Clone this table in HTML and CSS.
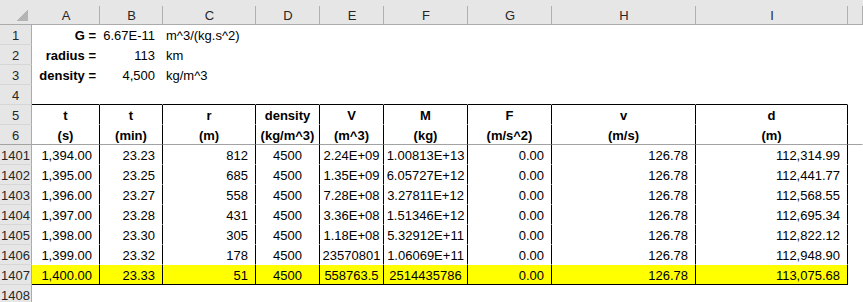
FILE: index.html
```html
<!DOCTYPE html>
<html lang="en">
<head>
    <meta charset="UTF-8">
    <meta name="viewport" content="width=device-width, initial-scale=1.0">
    <title>Orbit sheet</title>
    <link rel="stylesheet" href="styles.css">
</head>
<body>
    <div class="sheet">
        <div class="row heads">
            <div class="corner"></div>
            <div class="ch">A</div><div class="ch">B</div><div class="ch">C</div><div class="ch">D</div><div class="ch">E</div>
            <div class="ch">F</div><div class="ch">G</div><div class="ch">H</div><div class="ch">I</div><div class="ch"></div>
        </div>

        <div class="row">
            <div class="rh">1</div>
            <div class="c r-tight b">G =</div><div class="c r">6.67E-11</div><div class="c l">m^3/(kg.s^2)</div>
            <div class="c"></div><div class="c"></div><div class="c"></div><div class="c"></div><div class="c"></div><div class="c"></div><div class="pad"></div>
        </div>
        <div class="row">
            <div class="rh">2</div>
            <div class="c r-tight b">radius =</div><div class="c r">113</div><div class="c l">km</div>
            <div class="c"></div><div class="c"></div><div class="c"></div><div class="c"></div><div class="c"></div><div class="c"></div><div class="pad"></div>
        </div>
        <div class="row">
            <div class="rh">3</div>
            <div class="c r-tight b">density =</div><div class="c r">4,500</div><div class="c l">kg/m^3</div>
            <div class="c"></div><div class="c"></div><div class="c"></div><div class="c"></div><div class="c"></div><div class="c"></div><div class="pad"></div>
        </div>
        <div class="row edge-top">
            <div class="rh">4</div>
            <div class="c"></div><div class="c"></div><div class="c"></div><div class="c"></div><div class="c"></div>
            <div class="c"></div><div class="c"></div><div class="c"></div><div class="c"></div><div class="pad"></div>
        </div>

        <div class="row boxed titles">
            <div class="rh">5</div>
            <div class="c">t</div><div class="c">t</div><div class="c">r</div><div class="c">density</div><div class="c">V</div>
            <div class="c">M</div><div class="c">F</div><div class="c">v</div><div class="c">d</div><div class="pad"></div>
        </div>
        <div class="row boxed titles freeze">
            <div class="rh">6</div>
            <div class="c">(s)</div><div class="c">(min)</div><div class="c">(m)</div><div class="c">(kg/m^3)</div><div class="c">(m^3)</div>
            <div class="c">(kg)</div><div class="c">(m/s^2)</div><div class="c">(m/s)</div><div class="c">(m)</div><div class="pad"></div>
        </div>

        <div class="row boxed data">
            <div class="rh">1401</div>
            <div class="c r">1,394.00</div><div class="c r">23.23</div><div class="c r">812</div><div class="c m">4500</div><div class="c m">2.24E+09</div>
            <div class="c m">1.00813E+13</div><div class="c r">0.00</div><div class="c r">126.78</div><div class="c r">112,314.99</div><div class="pad"></div>
        </div>
        <div class="row boxed data">
            <div class="rh">1402</div>
            <div class="c r">1,395.00</div><div class="c r">23.25</div><div class="c r">685</div><div class="c m">4500</div><div class="c m">1.35E+09</div>
            <div class="c m">6.05727E+12</div><div class="c r">0.00</div><div class="c r">126.78</div><div class="c r">112,441.77</div><div class="pad"></div>
        </div>
        <div class="row boxed data">
            <div class="rh">1403</div>
            <div class="c r">1,396.00</div><div class="c r">23.27</div><div class="c r">558</div><div class="c m">4500</div><div class="c m">7.28E+08</div>
            <div class="c m">3.27811E+12</div><div class="c r">0.00</div><div class="c r">126.78</div><div class="c r">112,568.55</div><div class="pad"></div>
        </div>
        <div class="row boxed data">
            <div class="rh">1404</div>
            <div class="c r">1,397.00</div><div class="c r">23.28</div><div class="c r">431</div><div class="c m">4500</div><div class="c m">3.36E+08</div>
            <div class="c m">1.51346E+12</div><div class="c r">0.00</div><div class="c r">126.78</div><div class="c r">112,695.34</div><div class="pad"></div>
        </div>
        <div class="row boxed data">
            <div class="rh">1405</div>
            <div class="c r">1,398.00</div><div class="c r">23.30</div><div class="c r">305</div><div class="c m">4500</div><div class="c m">1.18E+08</div>
            <div class="c m">5.32912E+11</div><div class="c r">0.00</div><div class="c r">126.78</div><div class="c r">112,822.12</div><div class="pad"></div>
        </div>
        <div class="row boxed data">
            <div class="rh">1406</div>
            <div class="c r">1,399.00</div><div class="c r">23.32</div><div class="c r">178</div><div class="c m">4500</div><div class="c m">23570801</div>
            <div class="c m">1.06069E+11</div><div class="c r">0.00</div><div class="c r">126.78</div><div class="c r">112,948.90</div><div class="pad"></div>
        </div>
        <div class="row boxed data last">
            <div class="rh">1407</div>
            <div class="c r">1,400.00</div><div class="c r">23.33</div><div class="c r">51</div><div class="c m">4500</div><div class="c m">558763.5</div>
            <div class="c m">2514435786</div><div class="c r">0.00</div><div class="c r">126.78</div><div class="c r">113,075.68</div><div class="pad"></div>
        </div>

        <div class="row">
            <div class="rh">1408</div>
            <div class="c"></div><div class="c"></div><div class="c"></div><div class="c"></div><div class="c"></div>
            <div class="c"></div><div class="c"></div><div class="c"></div><div class="c"></div><div class="pad"></div>
        </div>
    </div>
</body>
</html>
```

FILE: styles.css
```css
html, body {
    margin: 0;
    padding: 0;
    background-color: #ffffff;
    overflow: hidden;
}
body {
    font-family: "Liberation Sans", Arial, sans-serif;
    font-size: 13px;
    color: #000000;
}
.sheet {
    width: 863px;
}
.row {
    display: grid;
    grid-template-columns: 32px 68px 63px 93px 64px 64px 84px 84px 144px 152px 1fr;
    height: 20px;
}
.row > div {
    box-sizing: border-box;
    height: 20px;
    padding-top: 2px;
    line-height: 17px;
    white-space: nowrap;
    overflow: hidden;
}

/* column letters */
.heads {
    height: 25px;
}
.heads > div {
    height: 25px;
    padding-top: 7px;
    text-align: center;
    color: #262626;
    border-bottom: 1px solid #ababab;
}
.corner {
    background: linear-gradient(to bottom right, transparent 50%, #b4b4b4 50%) right 4px bottom 3px / 11px 11px no-repeat, #e6e6e6;
}
.ch {
    background: linear-gradient(#b0b0b0, #b0b0b0) right 0 bottom 0 / 1px 18px no-repeat, #e6e6e6;
}

/* row numbers */
.rh {
    background-color: #e6e6e6;
    color: #262626;
    text-align: center;
    border-right: 1px solid #ababab;
    border-bottom: 1px solid #d6d6d6;
}

.c, .pad {
    border-right: 1px solid transparent;
    border-bottom: 1px solid transparent;
}
.r {
    text-align: right;
    padding-right: 7px;
}
.r-tight {
    text-align: right;
    padding-right: 3px;
}
.l {
    text-align: left;
    padding-left: 3px;
}
.m {
    text-align: center;
}
.b {
    font-weight: bold;
}

.edge-top .c {
    border-bottom-color: #000000;
}
.boxed .c {
    border-right-color: #000000;
}
.titles .c {
    text-align: center;
    font-weight: bold;
}
.freeze > div {
    border-bottom-color: #a2a2a2;
}
.last .c {
    background-color: #ffff00;
    border-bottom-color: #000000;
}
```
